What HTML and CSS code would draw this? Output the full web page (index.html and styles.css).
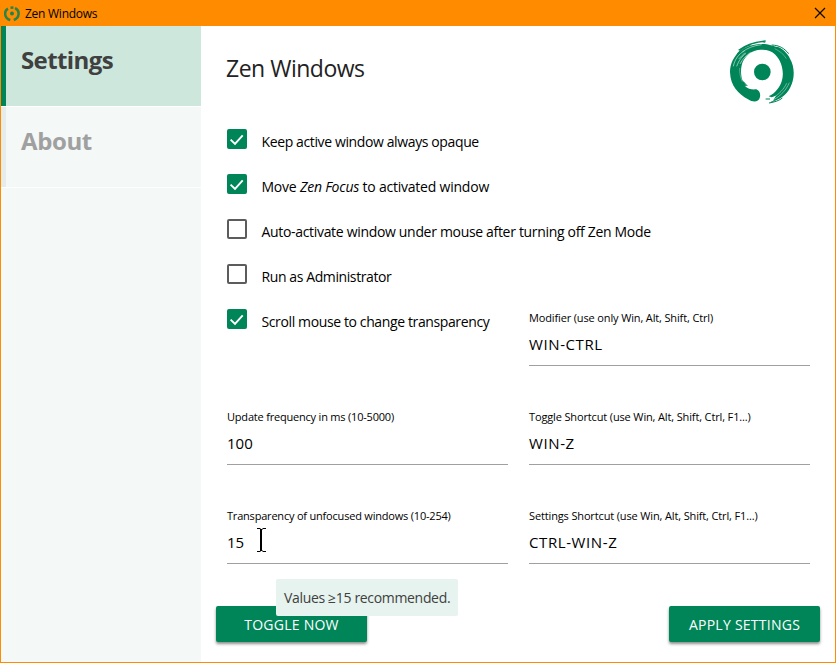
FILE: index.html
```html
<!DOCTYPE html>
<html lang="en">
<head>
<meta charset="utf-8">
<title>Zen Windows</title>
<link rel="stylesheet" href="styles.css">
</head>
<body>
<svg class="defs" aria-hidden="true">
  <symbol id="enso" viewBox="9 9 198 198">
    <g fill="currentColor">
      <path d="M101 186C98 197 83 201 66 190C38 174 13 150 12 108C12 84 24 60 42 46C60 31 84 24 108 24C128 24 144 31 154 33C166 33 186 54 192 68C202 84 205 106 202 126C197 154 184 175 160 188L141 194L150 179L137 184L128 181C148 171 164 152 169 128C174 104 166 74 148 56C138 45 122 40 104 41C80 42 61 55 51 76C44 92 43 114 49 132L62 150L56 149C66 160 78 161 91 160C101 164 105 175 101 186Z"/>
      <circle cx="109" cy="108" r="25"/>
    </g>
    <g fill="none" stroke="currentColor" stroke-width="4">
      <path d="M31 62C36 47 54 32 76 25M38 43C53 31 80 19 119 15M82 22C94 18 108 15 118 18" />
      <path d="M137 27C160 28 174 36 188 53M184 157C172 180 151 193 134 199M119 189H132M129 201C148 198 160 193 169 186M52 137L64 150" stroke-width="3"/>
    </g>
    <g class="streaks" fill="none">
      <path d="M22 91C26 70 39 53 56 44M32 91C39 72 48 61 60 52M42 84C50 68 61 58 74 49M49 48C63 37 83 28 107 26M38 69L57 50" stroke-width="2.500"/>
      <path d="M41 96C40 110 43 123 49 137M146 38C161 45 174 55 181 68" stroke-width="1.500"/>
      <path d="M190 140C180 163 164 179 145 190M182 142C173 160 160 174 140 186" stroke-width="2"/>
    </g>
  </symbol>
  <symbol id="tick" viewBox="0 0 20 20">
    <path d="M3.600 10.600L8 14.900L15.700 6.400" fill="none" stroke="#fff" stroke-width="1.900"/>
  </symbol>
</svg>

<div class="window">
  <header class="titlebar">
    <svg class="app-icon" viewBox="0 0 16 16">
      <path d="M6.300 14C.2 12.500-.4 5 4 2.600M6.500 1.800L9.500 1.500M11 2.200C16.200 4.500 15.800 11.800 9.800 14" fill="none" stroke="#2c8348" stroke-width="2.500"/>
      <circle cx="8" cy="7.500" r="2" fill="#18844f"/>
    </svg>
    <span class="app-name">Zen Windows</span>
    <svg class="close" viewBox="0 0 12 12"><path d="M1 1L11 11M11 1L1 11" stroke="#000" stroke-width="1.100"/></svg>
  </header>
  <div class="body">
    <nav class="sidebar">
      <a class="tab active">Settings</a>
      <a class="tab about">About</a>
    </nav>
    <main class="content">
      <div class="heading">
        <h1>Zen Windows</h1>
        <svg class="logo"><use href="#enso"/></svg>
      </div>
      <div class="options">
        <label class="option"><span class="box checked"><svg><use href="#tick"/></svg></span><span class="text">Keep active window always opaque</span></label>
        <label class="option"><span class="box checked"><svg><use href="#tick"/></svg></span><span class="text focus">Move <i>Zen Focus</i> to activated window</span></label>
        <label class="option"><span class="box"></span><span class="text auto">Auto-activate window under mouse after turning off Zen Mode</span></label>
        <label class="option"><span class="box"></span><span class="text admin">Run as Administrator</span></label>
      </div>
      <div class="fields">
        <label class="option"><span class="box checked"><svg><use href="#tick"/></svg></span><span class="text">Scroll mouse to change transparency</span></label>
        <div class="field"><span class="label">Modifier (use only Win, Alt, Shift, Ctrl)</span><span class="value">WIN-CTRL</span></div>
        <div class="field"><span class="label number">Update frequency in ms (10-5000)</span><span class="value number">100</span></div>
        <div class="field"><span class="label">Toggle Shortcut (use Win, Alt, Shift, Ctrl, F1...)</span><span class="value">WIN-Z</span></div>
        <div class="field"><span class="label number">Transparency of unfocused windows (10-254)</span><span class="value number">15</span>
          <svg class="cursor" viewBox="0 0 9 24"><path d="M0 .5H3.500M5.500 .5H9M3.500 1.500H5.500M3.500 22.500H5.500M0 23.500H3.500M5.500 23.500H9" stroke="#000"/><path d="M4 1V23" stroke="#000" stroke-width="2"/></svg>
        </div>
        <div class="field"><span class="label">Settings Shortcut (use Win, Alt, Shift, Ctrl, F1...)</span><span class="value">CTRL-WIN-Z</span></div>
      </div>
      <footer class="actions">
        <div class="button">TOGGLE NOW<div class="tooltip">Values ≥15 recommended.</div></div>
        <div class="button">APPLY SETTINGS</div>
      </footer>
    </main>
  </div>
</div>
</body>
</html>
```
FILE: styles.css
```css
* { box-sizing: border-box; }
body { margin: 0; font-family: "Open Sans", "Noto Sans", sans-serif; color: #000; }
.defs { position: absolute; width: 0; height: 0; }
.window { width: 836px; height: 663px; border: 1px solid #ff8c00; background: #fff; display: flex; flex-direction: column; }
.titlebar { height: 25px; background: #ff8c00; display: flex; align-items: center; padding: 0 9px 0 3px; font-size: 12px; letter-spacing: -.26px; flex: none; }
.app-icon { width: 16px; height: 16px; margin-right: 5px; }
.app-name { flex: 1; line-height: 16px; white-space: nowrap; }
.close { width: 12px; height: 12px; margin-top: -1px; }
.body { flex: 1; display: flex; min-height: 0; }
.sidebar { width: 200px; background: #f4f8f7; }
.tab { display: block; height: 80px; margin-bottom: 1px; border-left: 5px solid #e6ece9; box-shadow: 0 1px #fff; padding: 16px 0 0 15px; font-size: 24px; line-height: 36px; font-weight: 700; letter-spacing: -.6px; color: #a0a0a0; }
.tab.about { letter-spacing: -.4px; }
.tab.active { background-color: #cde7dd; border-left-color: #008558; color: #404040; }
.content { flex: 1; padding: 14px 25px 20px 26px; display: flex; flex-direction: column; }
.heading { display: flex; justify-content: space-between; }
h1 { margin: 10px 0 0 -1px; font-size: 23px; line-height: 36px; font-weight: 400; letter-spacing: -.5px; color: #222; }
.logo { width: 66px; height: 66px; margin: -1px 15px 0 0; color: #008558; }
.streaks { stroke: #fff; opacity: .65; }
.options { padding-top: 24px; }
.option { display: flex; height: 45px; font-size: 14px; }
.box { width: 20px; height: 20px; border: 2px solid #5c5c5c; border-radius: 2px; margin-right: 14.5px; flex: none; }
.box.checked { border: 0; background: #008558; }
.box svg { width: 20px; height: 20px; display: block; }
.text { line-height: 20px; padding-top: 3px; white-space: nowrap; letter-spacing: -.38px; }
.text.focus { letter-spacing: -.22px; }
.text.auto { letter-spacing: -.32px; }
.text.admin { letter-spacing: -.4px; }
.fields { display: grid; grid-template-columns: 281px 281px; column-gap: 21px; grid-auto-rows: 99px; }
.field { position: relative; height: 57px; border-bottom: 1px solid #a0a0a0; display: flex; flex-direction: column; white-space: nowrap; }
.label { font-size: 11px; line-height: 16px; letter-spacing: -.14px; padding-top: 1px; }
.label.number { letter-spacing: -.2px; }
.value { font-size: 15px; line-height: 22px; margin-top: 7px; letter-spacing: .6px; }
.value.number { letter-spacing: 0; }
.cursor { position: absolute; left: 30px; top: 21px; width: 9px; height: 24px; }
.actions { display: flex; justify-content: space-between; margin: auto -10px 0 -11px; }
.button { position: relative; width: 151px; height: 36px; border-radius: 2px; background: #008558; color: #fff; font-size: 14px; line-height: 38px; letter-spacing: .25px; text-align: center; white-space: nowrap; box-shadow: 0 2px 3px rgba(0, 0, 0, .45); }
.tooltip { position: absolute; left: 60px; top: -27px; width: 182px; height: 37px; border-radius: 2px; background: #e6f3ee; color: #404040; font-size: 14px; line-height: 37px; letter-spacing: -.33px; text-align: left; padding-left: 8px; }
```
